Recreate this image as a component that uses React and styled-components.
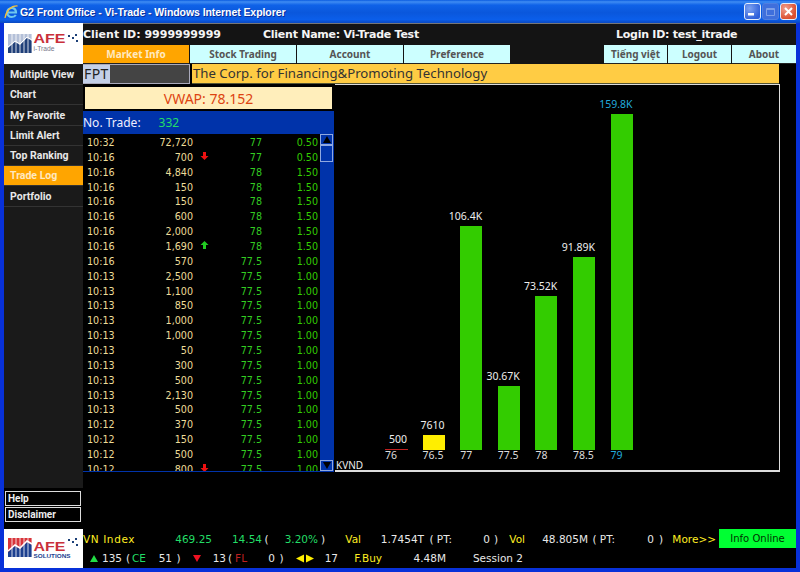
import React from "react";
import styled, { createGlobalStyle } from "styled-components";

const GlobalStyle = createGlobalStyle`
  html, body {
    margin: 0;
    padding: 0;
    background: #000;
  }
  body {
    font-family: "Noto Sans", "DejaVu Sans", sans-serif;
    font-size: 11px;
  }
`;

const Win = styled.div`
  width: 800px;
  height: 572px;
  display: flex;
  flex-direction: column;
  overflow: hidden;
  background: #0831d9;
`;

const TitleBar = styled.div`
  height: 23px;
  flex: none;
  display: flex;
  align-items: center;
  padding: 0 3px 0 4px;
  background: linear-gradient(180deg, #0a5be0 0%, #3f8cf3 8%, #0f62e8 22%, #0a57dc 55%, #0b5eea 85%, #0a48c0 100%);
`;

const TitleText = styled.div`
  flex: 1;
  margin-left: 1px;
  color: #fff;
  font-family: "Liberation Sans", sans-serif;
  font-weight: bold;
  font-size: 10.5px;
  letter-spacing: -0.07px;
  white-space: nowrap;
  text-shadow: 1px 1px 0 #0a2f9a;
`;

const WinButtons = styled.div`
  display: flex;
  gap: 1px;
`;

const WinButton = styled.div`
  width: 17px;
  height: 17px;
  border: 1px solid ${(p) => (p.$dim ? "#4f7fe0" : "#e6eefc")};
  border-radius: 3px;
  box-sizing: border-box;
  display: flex;
  align-items: center;
  justify-content: center;
  background: ${(p) => (p.$close
    ? "radial-gradient(circle at 30% 30%, #f0a090, #dc5030 70%)"
    : p.$dim
      ? "#3f6fdc"
      : "radial-gradient(circle at 30% 30%, #7ea2f0, #2f60da 75%)")};
`;

const Frame = styled.div`
  flex: 1;
  min-height: 0;
  margin: 0 4px 4px 4px;
  display: flex;
  flex-direction: column;
  background: #000;
`;

const Upper = styled.div`
  flex: 1;
  min-height: 0;
  display: flex;
`;

const Sidebar = styled.div`
  width: 79px;
  flex: none;
  display: flex;
  flex-direction: column;
`;

const LogoBox = styled.div`
  height: 41px;
  flex: none;
  background: #fff;
  display: flex;
  padding-left: 2px;
`;

const SideNav = styled.div`
  height: 423px;
  flex: none;
  padding-top: 1px;
  background: #1a1a1a;
  display: flex;
  flex-direction: column;
`;

const SideItem = styled.div`
  height: 19px;
  margin-bottom: 0.3px;
  display: flex;
  align-items: center;
  padding-left: 6px;
  font-family: Roboto, sans-serif;
  font-size: 10.5px;
  font-weight: bold;
  color: ${(p) => (p.$active ? "#ffe9c0" : "#e8e8e8")};
  background: ${(p) => (p.$active ? "#ffa500" : "#1a1a1a")};
  border-bottom: 1px solid #333;
`;

const SideLinks = styled.div`
  display: flex;
  flex-direction: column;
  gap: 1px;
  margin: 3px 2px 0 1px;
`;

const SideLink = styled.div`
  height: 13px;
  border: 1px solid #ddd;
  display: flex;
  align-items: center;
  padding-left: 2px;
  color: #eee;
  font-family: Roboto, sans-serif;
  font-weight: bold;
  font-size: 10px;
`;

const Content = styled.div`
  flex: 1;
  min-width: 0;
  display: flex;
  flex-direction: column;
`;

const ClientBar = styled.div`
  height: 22px;
  flex: none;
  box-sizing: border-box;
  border-top: 1px solid #777;
  background: #141414;
  display: flex;
  align-items: center;
  color: #f4f4f4;
  font-family: "DejaVu Sans", sans-serif;
  font-size: 11px;
  font-weight: bold;
  white-space: nowrap;
`;

const ClientField = styled.div`
  width: ${(p) => p.$w}px;
  flex: none;
  letter-spacing: ${(p) => p.$ls || 0}px;
`;

const TabBar = styled.div`
  height: 19px;
  flex: none;
  background: #141414;
  display: flex;
  gap: 1px;
`;

const Tab = styled.div`
  width: ${(p) => p.$w}px;
  flex: none;
  display: flex;
  align-items: center;
  justify-content: center;
  font-size: 10px;
  font-weight: bold;
  background: ${(p) => (p.$active ? "#ffa500" : "#ccffff")};
  color: ${(p) => (p.$active ? "#ffe9c0" : "#555")};
  border-bottom: 1px solid #222;
  box-sizing: border-box;
`;

const TabSpacer = styled.div`
  flex: 1;
`;

const SymbolRow = styled.div`
  height: 20px;
  flex: none;
  display: flex;
`;

const SymbolInput = styled.div`
  width: 107px;
  flex: none;
  display: flex;
  background: #444;
  border: 1px solid #aab;
  border-width: 1px 1px 1px 0;
  box-sizing: border-box;
  font-size: 14px;
  color: #222;
  line-height: 18px;
`;

const SymbolText = styled.span`
  width: 27px;
  background: #c4d0e8;
  padding-left: 1px;
  letter-spacing: 0.4px;
  box-sizing: border-box;
`;

const CompanyName = styled.div`
  width: 587px;
  flex: none;
  margin-left: 2px;
  background: #ffcc44;
  color: #333;
  font-size: 13.2px;
  line-height: 18px;
  padding-left: 1px;
  border-bottom: 1px solid #553;
  box-sizing: border-box;
  white-space: nowrap;
`;

const Workspace = styled.div`
  height: 388px;
  flex: none;
  display: flex;
  width: 697px;
`;

const TradePanel = styled.div`
  width: 251px;
  flex: none;
  display: flex;
  flex-direction: column;
`;

const Vwap = styled.div`
  height: 22px;
  flex: none;
  margin: 3px 2px 1px 2px;
  background: #ffeebb;
  color: #dd4411;
  font-size: 14px;
  display: flex;
  align-items: center;
  justify-content: center;
`;

const TradeHead = styled.div`
  height: 23px;
  flex: none;
  margin-top: 1px;
  background: #0033aa;
  display: flex;
  align-items: center;
  color: #eef;
  font-size: 12px;
`;

const TradeCount = styled.span`
  margin-left: 18px;
  color: #22dd66;
`;

const TradeBody = styled.div`
  flex: 1;
  min-height: 0;
  display: flex;
  border: solid #0033aa;
  border-width: 0 1px 1px 0;
  overflow: hidden;
`;

const TradeList = styled.div`
  flex: 1;
  min-width: 0;
  padding-top: 1px;
  overflow: hidden;
`;

const TradeRow = styled.div`
  height: 14.86px;
  display: grid;
  grid-template-columns: 4px 36px 70px 22px 47px 56px;
  align-items: center;
  font-family: "DejaVu Sans", sans-serif;
  font-size: 9.6px;
  white-space: nowrap;
`;

const Cell = styled.div`
  grid-column: ${(p) => p.$col};
  text-align: ${(p) => p.$align || "right"};
  color: ${(p) => p.$color};
`;

const Scroll = styled.div`
  width: 13px;
  flex: none;
  background: #0033aa;
  display: flex;
  flex-direction: column;
  justify-content: space-between;
`;

const ScrollThumbWrap = styled.div`
  display: flex;
  flex-direction: column;
`;

const ScrollBtn = styled.div`
  height: 11px;
  background: #0033aa;
  border: 1px solid #8fa8e0;
  box-sizing: border-box;
  display: flex;
  align-items: center;
  justify-content: center;
`;

const ScrollThumb = styled.div`
  height: 17px;
  background: #0033aa;
  border: 1px solid #8fa8e0;
  box-sizing: border-box;
`;

const Chart = styled.div`
  width: 445px;
  flex: none;
  box-sizing: border-box;
  border: solid #ddd;
  border-width: 1px 1px 2px 0;
  margin-left: 1px;
  background: #000;
  display: flex;
  flex-direction: column;
  justify-content: flex-end;
  font-size: 10.5px;
  color: #eee;
`;

const Plot = styled.div`
  display: flex;
  align-items: flex-end;
  padding-left: 50px;
`;

const Column = styled.div`
  width: 37.6px;
  flex: none;
  display: flex;
  flex-direction: column;
`;

const BarValue = styled.div`
  width: 22px;
  display: flex;
  justify-content: flex-end;
  white-space: nowrap;
  margin-bottom: 3px;
  line-height: 13px;
  color: ${(p) => p.$color || "#eee"};
`;

const Bar = styled.div`
  width: ${(p) => p.$w || 22}px;
  background: ${(p) => p.$color};
  flex: none;
`;

const AxisLabel = styled.div`
  line-height: 11px;
  height: 10px;
  color: ${(p) => p.$color || "#ddd"};
`;

const Unit = styled.div`
  height: 10px;
  line-height: 10px;
  padding-left: 1px;
  font-size: 10px;
`;

const Ticker = styled.div`
  height: 39px;
  flex: none;
  display: flex;
`;

const TickerLogo = styled(LogoBox)`
  width: 79px;
  height: 39px;
  box-sizing: border-box;
`;

const TickerLines = styled.div`
  flex: 1;
  min-width: 0;
  display: flex;
  flex-direction: column;
  font-family: "DejaVu Sans", sans-serif;
  font-size: 10.5px;
`;

const TickerLine = styled.div`
  height: ${(p) => p.$h}px;
  flex: none;
  display: flex;
  align-items: center;
  white-space: nowrap;
  color: #eee;
`;

const Val = styled.span`
  width: ${(p) => p.$w}px;
  flex: none;
  text-align: ${(p) => p.$align || "right"};
  color: ${(p) => p.$color || "#e8e8e8"};
  letter-spacing: ${(p) => p.$ls || 0}px;
`;

const InfoOnline = styled.div`
  width: 77px;
  height: 19px;
  margin-left: 3px;
  flex: none;
  background: #00ff33;
  color: #003300;
  display: flex;
  align-items: center;
  justify-content: center;
  font-size: 10px;
`;

const Arrow = ({ up, color }) => (
  <svg width="9" height="10" viewBox="0 0 9 10">
    <path d={up ? "M4.5 1 L8.5 5 H6 V9 H3 V5 H0.5 Z" : "M3 1 H6 V5 H8.5 L4.5 9 L0.5 5 H3 Z"} fill={color} />
  </svg>
);

const Tri = ({ dir, color }) => {
  const d = {
    up: "M4 1 L8 8 H0 Z",
    down: "M0 1 H8 L4 8 Z",
    left: "M8 0.5 V8.5 L0 4.5 Z",
    right: "M0 0.5 V8.5 L8 4.5 Z",
  }[dir];
  return (
    <svg width="8" height="9" viewBox="0 0 8 9" style={{ flex: "none" }}>
      <path d={d} fill={color} />
    </svg>
  );
};

// both logos share the striped chart mark, only the colours and the small line differ
const Logo = ({ red, sub, top, height }) => {
  const y = top;
  const stripes = [0, 1, 2, 3, 4, 5];
  return (
    <svg width="76" height={height} viewBox={`0 0 76 ${height}`}>
      <rect x="2" y={y} width="24" height="19" fill={red ? "#d8343a" : "#b4c0d8"} />
      <path
        d={`M2 ${y + 19} V${y + 14} L9 ${y + 8} L14 ${y + 11} L21 ${y + 4} L26 ${y + 7} V${y + 19} Z`}
        fill={red ? "#1c3f8f" : "#1f3f78"}
      />
      <path
        d={`M2 ${y + 13} L9 ${y + 7} L14 ${y + 10} L21 ${y + 3} L26 ${y + 6}`}
        fill="none"
        stroke="#fff"
        strokeWidth={red ? 1.5 : 1}
      />
      {stripes.map((i) => (
        <rect key={i} x={5.6 + i * 4} y={y} width="0.8" height="19" fill="#fff" />
      ))}
      <text x="27.5" y={y + (red ? 12.5 : 9)} textLength="32" lengthAdjust="spacingAndGlyphs" fontFamily="Liberation Sans, sans-serif" fontWeight="bold" fontSize="12" fill="#c9303a">AFE</text>
      <text x="27.5" y={y + (red ? 19.5 : 17)} textLength={red ? 37 : 21} lengthAdjust="spacingAndGlyphs" fontFamily="Liberation Sans, sans-serif" fontWeight={red ? "bold" : "normal"} fontSize={red ? 5 : 7} fill={red ? "#1c3f8f" : "#778"}>{sub}</text>
      <rect x="62" y={y + 1} width="2" height="2" fill="#1c3f78" />
      <rect x="66" y={y + 3} width="2" height="2" fill="#1c3f78" />
      <rect x="69" y={y} width="2" height="2" fill="#1c3f78" />
      <rect x="70" y={y + 6} width="2" height="2" fill="#1c3f78" />
    </svg>
  );
};

const IeIcon = () => (
  <svg width="15" height="16" viewBox="0 0 15 16" style={{ flex: "none" }}>
    <path d="M3.5 8.5 H12 C12 5.5 10 4 7.8 4 C5.2 4 3.2 6 3.2 8.5 C3.2 11 5.2 13 7.8 13 C9.6 13 11 12.2 11.8 11" fill="none" stroke="#6fc8ee" strokeWidth="2.2" />
    <path d="M1 14 C2 7 7 1.5 13.5 2" fill="none" stroke="#f0c040" strokeWidth="1.3" />
  </svg>
);

const trades = [
  ["10:32", "72,720", "", "77", "0.50"],
  ["10:16", "700", "down", "77", "0.50"],
  ["10:16", "4,840", "", "78", "1.50"],
  ["10:16", "150", "", "78", "1.50"],
  ["10:16", "150", "", "78", "1.50"],
  ["10:16", "600", "", "78", "1.50"],
  ["10:16", "2,000", "", "78", "1.50"],
  ["10:16", "1,690", "up", "78", "1.50"],
  ["10:16", "570", "", "77.5", "1.00"],
  ["10:13", "2,500", "", "77.5", "1.00"],
  ["10:13", "1,100", "", "77.5", "1.00"],
  ["10:13", "850", "", "77.5", "1.00"],
  ["10:13", "1,000", "", "77.5", "1.00"],
  ["10:13", "1,000", "", "77.5", "1.00"],
  ["10:13", "50", "", "77.5", "1.00"],
  ["10:13", "300", "", "77.5", "1.00"],
  ["10:13", "500", "", "77.5", "1.00"],
  ["10:13", "2,130", "", "77.5", "1.00"],
  ["10:13", "500", "", "77.5", "1.00"],
  ["10:12", "370", "", "77.5", "1.00"],
  ["10:12", "150", "", "77.5", "1.00"],
  ["10:12", "500", "", "77.5", "1.00"],
  ["10:12", "800", "down", "77.5", "1.00"],
];

const bars = [
  { label: "76", value: "500", h: 1, color: "#c02020" },
  { label: "76.5", value: "7610", h: 15, color: "#ffee00" },
  { label: "77", value: "106.4K", h: 224, color: "#33cc00" },
  { label: "77.5", value: "30.67K", h: 64, color: "#33cc00" },
  { label: "78", value: "73.52K", h: 154, color: "#33cc00" },
  { label: "78.5", value: "91.89K", h: 193, color: "#33cc00" },
  { label: "79", value: "159.8K", h: 336, color: "#33cc00", top: true },
];

const menu = ["Multiple View", "Chart", "My Favorite", "Limit Alert", "Top Ranking", "Trade Log", "Portfolio"];

const App = () => (
  <Win>
    <GlobalStyle />
    <TitleBar>
      <IeIcon />
      <TitleText>G2 Front Office - Vi-Trade - Windows Internet Explorer</TitleText>
      <WinButtons>
        <WinButton>
          <svg width="9" height="9" viewBox="0 0 9 9"><rect x="0" y="6" width="6" height="2.5" fill="#fff" /></svg>
        </WinButton>
        <WinButton $dim>
          <svg width="9" height="9" viewBox="0 0 9 9"><path d="M0.5 1.5 H8.5 V8.5 H0.5 Z M0.5 2.5 H8.5" fill="none" stroke="#7fa0e8" /></svg>
        </WinButton>
        <WinButton $close>
          <svg width="11" height="11" viewBox="0 0 11 11"><path d="M2 2 L9 9 M9 2 L2 9" stroke="#fff" strokeWidth="2" /></svg>
        </WinButton>
      </WinButtons>
    </TitleBar>
    <Frame>
      <Upper>
        <Sidebar>
          <LogoBox><Logo sub="i-Trade" top={11} height={41} /></LogoBox>
          <SideNav>
            {menu.map((m) => (
              <SideItem key={m} $active={m === "Trade Log"}>{m}</SideItem>
            ))}
          </SideNav>
          <SideLinks>
            <SideLink>Help</SideLink>
            <SideLink>Disclaimer</SideLink>
          </SideLinks>
        </Sidebar>
        <Content>
          <ClientBar>
            <ClientField $w={180}>Client ID: 9999999999</ClientField>
            <ClientField $w={353} $ls={-0.25}>Client Name: Vi-Trade Test</ClientField>
            <ClientField $w={150} $ls={-0.25}>Login ID: test_itrade</ClientField>
          </ClientBar>
          <TabBar>
            <Tab $w={106} $active>Market Info</Tab>
            <Tab $w={106}>Stock Trading</Tab>
            <Tab $w={106}>Account</Tab>
            <Tab $w={106}>Preference</Tab>
            <TabSpacer />
            <Tab $w={63}>Tiếng việt</Tab>
            <Tab $w={63}>Logout</Tab>
            <Tab $w={64}>About</Tab>
          </TabBar>
          <SymbolRow>
            <SymbolInput><SymbolText>FPT</SymbolText></SymbolInput>
            <CompanyName>The Corp. for Financing&amp;Promoting Technology</CompanyName>
          </SymbolRow>
          <Workspace>
            <TradePanel>
              <Vwap>VWAP: 78.152</Vwap>
              <TradeHead>No. Trade:<TradeCount>332</TradeCount></TradeHead>
              <TradeBody>
                <TradeList>
                  {trades.map((t, i) => (
                    <TradeRow key={i}>
                      <Cell $col={2} $align="left" $color="#eedd99">{t[0]}</Cell>
                      <Cell $col={3} $color="#eedd99">{t[1]}</Cell>
                      <Cell $col={4} $align="center" $color="#f00">
                        {t[2] && <Arrow up={t[2] === "up"} color={t[2] === "up" ? "#22cc22" : "#ee1111"} />}
                      </Cell>
                      <Cell $col={5} $color="#33cc22">{t[3]}</Cell>
                      <Cell $col={6} $color="#33cc00">{t[4]}</Cell>
                    </TradeRow>
                  ))}
                </TradeList>
                <Scroll>
                  <ScrollThumbWrap>
                    <ScrollBtn><Tri dir="up" color="#000" /></ScrollBtn>
                    <ScrollThumb />
                  </ScrollThumbWrap>
                  <ScrollBtn><Tri dir="down" color="#000" /></ScrollBtn>
                </Scroll>
              </TradeBody>
            </TradePanel>
            <Chart>
              <Plot>
                {bars.map((b) => (
                  <Column key={b.label}>
                    <BarValue $color={b.top ? "#22aadd" : undefined}>{b.value}</BarValue>
                    <Bar $color={b.color} $w={b.h === 1 ? 23 : 22} style={{ height: b.h }} />
                    <AxisLabel $color={b.top ? "#22aadd" : undefined}>{b.label}</AxisLabel>
                  </Column>
                ))}
              </Plot>
              <Unit>KVND</Unit>
            </Chart>
          </Workspace>
        </Content>
      </Upper>
      <Ticker>
        <TickerLogo><Logo red sub="SOLUTIONS" top={9} height={39} /></TickerLogo>
        <TickerLines>
          <TickerLine $h={19}>
            <Val $w={52} $align="left" $color="#ffee22" $ls={0.6}>VN Index</Val>
            <Val $w={77} $color="#22dd66">469.25</Val>
            <Val $w={50} $color="#22dd66">14.54</Val>
            <Val $w={9} $align="center">(</Val>
            <Val $w={47} $color="#22dd66">3.20%</Val>
            <Val $w={10} $align="center">)</Val>
            <Val $w={33} $color="#ffee22">Val</Val>
            <Val $w={63}>1.7454T</Val>
            <Val $w={28}>( PT:</Val>
            <Val $w={38}>0</Val>
            <Val $w={12} $align="center">)</Val>
            <Val $w={23} $color="#ffee22">Vol</Val>
            <Val $w={63}>48.805M</Val>
            <Val $w={27}>( PT:</Val>
            <Val $w={39}>0</Val>
            <Val $w={14} $align="center">)</Val>
            <Val $w={48} $color="#ffee22">More&gt;&gt;</Val>
            <InfoOnline>Info Online</InfoOnline>
          </TickerLine>
          <TickerLine $h={20}>
            <Val $w={7} />
            <Tri dir="up" color="#22dd44" />
            <Val $w={24}>135</Val>
            <Val $w={8}>(</Val>
            <Val $w={16} $color="#22dd66">CE</Val>
            <Val $w={26}>51</Val>
            <Val $w={13} $align="center">)</Val>
            <Val $w={8} />
            <Tri dir="down" color="#ee1122" />
            <Val $w={25}>13</Val>
            <Val $w={6}>(</Val>
            <Val $w={15} $color="#c02020">FL</Val>
            <Val $w={28}>0</Val>
            <Val $w={13} $align="center">)</Val>
            <Val $w={8} />
            <Tri dir="left" color="#ffee00" />
            <Val $w={2} />
            <Tri dir="right" color="#ffee00" />
            <Val $w={24}>17</Val>
            <Val $w={44} $color="#ffee22">F.Buy</Val>
            <Val $w={64}>4.48M</Val>
            <Val $w={77}>Session 2</Val>
          </TickerLine>
        </TickerLines>
      </Ticker>
    </Frame>
  </Win>
);

export default App;
